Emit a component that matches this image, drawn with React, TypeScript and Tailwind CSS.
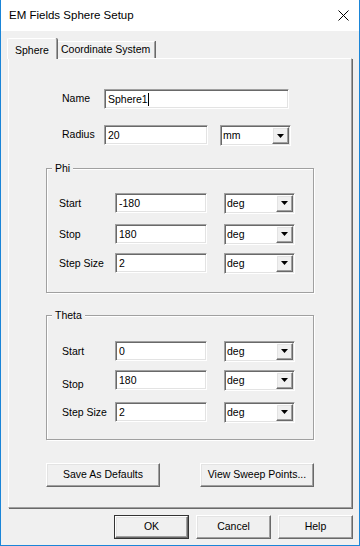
import React from 'react';

const sunken =
  'border border-t-[#a0a0a0] border-l-[#a0a0a0] border-r-white border-b-white shadow-[inset_1px_1px_0_#696969,inset_-1px_-1px_0_#e3e3e3]';
const raised =
  'border border-t-white border-l-white border-r-[#696969] border-b-[#696969] shadow-[inset_-1px_-1px_0_#a0a0a0,inset_1px_1px_0_#e3e3e3]';

const TextBox = ({ value, width, caret }: { value: string; width: string; caret?: boolean }) => (
  <div className={`${sunken} ${width} h-[20px] bg-white flex items-center pl-[3px] leading-none`}>
    <span>{value}</span>
    {caret && <span className="w-px h-[13px] bg-black" />}
  </div>
);

const Select = ({ value }: { value: string }) => (
  <div className={`${sunken} w-[71px] h-[21px] bg-white flex items-center`}>
    <span className="flex-1 pl-[2px] leading-none">{value}</span>
    <div className={`${raised} w-[17px] h-[17px] m-px bg-[#f0f0f0] flex items-center justify-center`}>
      <svg width="7" height="4" viewBox="0 0 7 4">
        <path d="M0 0h7L3.5 4z" fill="#000" />
      </svg>
    </div>
  </div>
);

const Button = ({ label, width, isDefault }: { label: string; width: string; isDefault?: boolean }) =>
  isDefault ? (
    <div className={`${width} h-[24px] border border-[#333] flex`}>
      <div className={`${raised} flex-1 flex items-center justify-center`}>{label}</div>
    </div>
  ) : (
    <div className={`${raised} ${width} h-[24px] flex items-center justify-center`}>{label}</div>
  );

interface Row {
  label: string;
  value: string;
  rowClass: string;
  labelClass?: string;
}

const Group = ({ title, rows, labelPad }: { title: string; rows: Row[]; labelPad: string }) => (
  <div className="relative w-[268px] h-[125px] border border-[#a0a0a0] shadow-[inset_1px_1px_0_white,1px_1px_0_white] flex flex-col">
    <span className="absolute -top-[7px] left-[5px] px-[3px] bg-[#f0f0f0] leading-[13px]">{title}</span>
    {rows.map((r) => (
      <div key={r.label} className={`flex items-center h-[20px] ${r.rowClass}`}>
        <span className={`${labelPad} ${r.labelClass ?? ''} shrink-0 leading-[13px]`}>{r.label}</span>
        <TextBox value={r.value} width="w-[92px]" />
        <div className="ml-[17px]">
          <Select value="deg" />
        </div>
      </div>
    ))}
  </div>
);

export default function App() {
  return (
    <div className="w-[360px] h-[546px] bg-[#f0f0f0] border-x border-b border-[#1a85d8] flex flex-col font-['Liberation_Sans',Arial,sans-serif] text-[10.5px] text-black">
      {/* title bar */}
      <div className="h-[31px] bg-white flex items-center justify-between pl-[8px] pr-[10px]">
        <span className="text-[11.5px]">EM Fields Sphere Setup</span>
        <svg width="11" height="11" viewBox="0 0 11 11">
          <path d="M0.5 0.5L10.5 10.5M10.5 0.5L0.5 10.5" stroke="#000" strokeWidth="1" />
        </svg>
      </div>

      <div className="pl-[7px] mt-[7px] flex flex-col">
        {/* tabs */}
        <div className="flex items-end h-[20px]">
          <div className="relative z-10 -ml-px -mb-px h-[21px] w-[50px] bg-[#f0f0f0] border-t border-l border-white border-r border-r-[#a0a0a0] shadow-[1px_0_0_#696969] rounded-t-[2px] flex items-start pt-[4px] pl-[7px]">
            Sphere
          </div>
          <div className="h-[17px] w-[98px] border-t border-l border-white border-r border-r-[#a0a0a0] shadow-[1px_0_0_#696969] flex items-center pl-[3px]">
            Coordinate System
          </div>
        </div>

        {/* panel */}
        <div className="w-[344px] h-[450px] border border-t-white border-l-white border-r-[#a0a0a0] border-b-[#a0a0a0] shadow-[1px_1px_0_#696969] flex flex-col">
          <div className="flex items-center h-[20px] mt-[30px] ml-[53px]">
            <span className="w-[42px]">Name</span>
            <TextBox value="Sphere1" width="w-[185px]" caret />
          </div>
          <div className="flex items-start h-[21px] mt-[16px] ml-[53px]">
            <span className="w-[42px] h-[20px] flex items-center">Radius</span>
            <TextBox value="20" width="w-[104px]" />
            <div className="ml-[12px]">
              <Select value="mm" />
            </div>
          </div>

          <div className="mt-[22px] ml-[37px]">
            <Group
              title="Phi"
              labelPad="w-[68px] pl-[12px]"
              rows={[
                { label: 'Start', value: '-180', rowClass: 'mt-[24px]' },
                { label: 'Stop', value: '180', rowClass: 'mt-[11px]' },
                { label: 'Step Size', value: '2', rowClass: 'mt-[9px]' },
              ]}
            />
          </div>

          <div className="mt-[22px] ml-[37px]">
            <Group
              title="Theta"
              labelPad="w-[68px] pl-[15px]"
              rows={[
                { label: 'Start', value: '0', rowClass: 'mt-[25px]' },
                { label: 'Stop', value: '180', rowClass: 'mt-[9px]', labelClass: 'pt-[8px]' },
                { label: 'Step Size', value: '2', rowClass: 'mt-[12px]' },
              ]}
            />
          </div>

          <div className="flex mt-[23px] ml-[37px] gap-[40px]">
            <Button label="Save As Defaults" width="w-[114px]" />
            <Button label="View Sweep Points..." width="w-[114px]" />
          </div>
        </div>
      </div>

      {/* dialog buttons */}
      <div className="flex justify-end gap-[7px] pr-[6px] mt-[7px]">
        <Button label="OK" width="w-[75px]" isDefault />
        <Button label="Cancel" width="w-[75px]" />
        <Button label="Help" width="w-[75px]" />
      </div>
    </div>
  );
}
